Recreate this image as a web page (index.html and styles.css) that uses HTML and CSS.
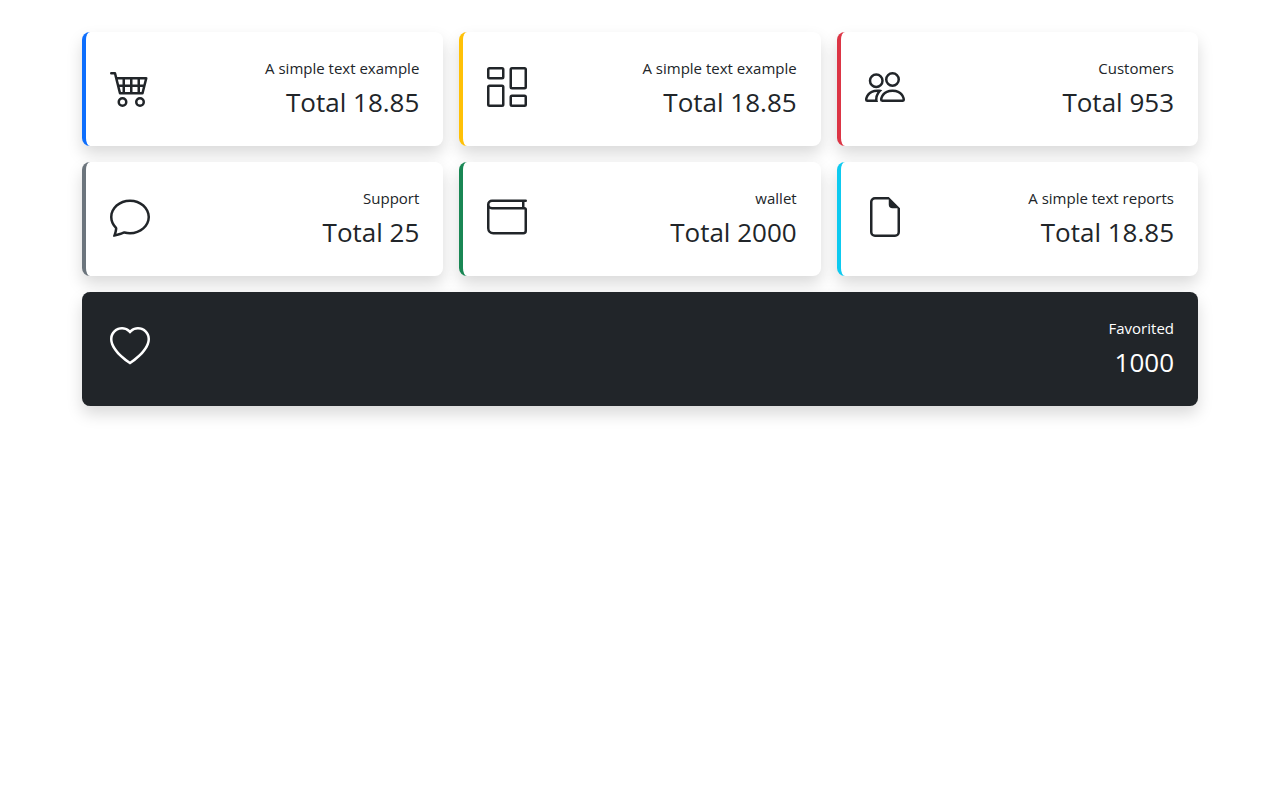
FILE: index.html
```html
<!DOCTYPE html>
<html lang="en">
<head>
    <meta charset="utf-8">
    <meta name="viewport" content="width=device-width, initial-scale=1">
    <title>Cards</title>
    <link rel="stylesheet" href="styles.css">
</head>
<body>
    <main class="container">
        <div class="cards">
            <div class="card card-primary">
                <svg class="icon" viewBox="0 0 16 16" aria-hidden="true">
                    <path d="M0 2.5A.5.5 0 0 1 .5 2H2a.5.5 0 0 1 .485.379L2.89 4H14.5a.5.5 0 0 1 .485.621l-1.5 6A.5.5 0 0 1 13 11H4a.5.5 0 0 1-.485-.379L1.61 3H.5a.5.5 0 0 1-.5-.5M3.14 5l.5 2H5V5zM6 5v2h2V5zm3 0v2h2V5zm3 0v2h1.36l.5-2zm1.11 3H12v2h.61zM11 8H9v2h2zM8 8H6v2h2zM5 8H3.89l.5 2H5zm0 5a1 1 0 1 0 0 2 1 1 0 0 0 0-2m-2 1a2 2 0 1 1 4 0 2 2 0 0 1-4 0m9-1a1 1 0 1 0 0 2 1 1 0 0 0 0-2m-2 1a2 2 0 1 1 4 0 2 2 0 0 1-4 0"/>
                </svg>
                <div class="info">
                    <p>A simple text example</p>
                    <h3>Total 18.85</h3>
                </div>
            </div>

            <div class="card card-warning">
                <svg class="icon" viewBox="0 0 16 16" aria-hidden="true">
                    <path d="M6 1v3H1V1zM1 0a1 1 0 0 0-1 1v3a1 1 0 0 0 1 1h5a1 1 0 0 0 1-1V1a1 1 0 0 0-1-1zm14 12v3h-5v-3zm-5-1a1 1 0 0 0-1 1v3a1 1 0 0 0 1 1h5a1 1 0 0 0 1-1v-3a1 1 0 0 0-1-1zM6 8v7H1V8zM1 7a1 1 0 0 0-1 1v7a1 1 0 0 0 1 1h5a1 1 0 0 0 1-1V8a1 1 0 0 0-1-1zm14-6v7h-5V1zm-5-1a1 1 0 0 0-1 1v7a1 1 0 0 0 1 1h5a1 1 0 0 0 1-1V1a1 1 0 0 0-1-1z"/>
                </svg>
                <div class="info">
                    <p>A simple text example</p>
                    <h3>Total 18.85</h3>
                </div>
            </div>

            <div class="card card-danger">
                <svg class="icon" viewBox="0 0 16 16" aria-hidden="true">
                    <path d="M15 14s1 0 1-1-1-4-5-4-5 3-5 4 1 1 1 1zm-7.978-1L7 12.996c.001-.264.167-1.03.76-1.72C8.312 10.629 9.282 10 11 10c1.717 0 2.687.63 3.24 1.276.593.69.758 1.457.76 1.72l-.008.002-.014.002zM11 7a2 2 0 1 0 0-4 2 2 0 0 0 0 4m3-2a3 3 0 1 1-6 0 3 3 0 0 1 6 0M6.936 9.28a6 6 0 0 0-1.23-.247A7 7 0 0 0 5 9c-4 0-5 3-5 4q0 1 1 1h4.216A2.24 2.24 0 0 1 5 13c0-1.01.377-2.042 1.09-2.904.243-.294.526-.569.846-.816M4.92 10A5.5 5.5 0 0 0 4 13H1c0-.26.164-1.03.76-1.724.545-.636 1.492-1.256 3.16-1.275zM1.5 5.5a3 3 0 1 1 6 0 3 3 0 0 1-6 0m3-2a2 2 0 1 0 0 4 2 2 0 0 0 0-4"/>
                </svg>
                <div class="info">
                    <p>Customers</p>
                    <h3>Total 953</h3>
                </div>
            </div>

            <div class="card card-secondary">
                <svg class="icon" viewBox="0 0 16 16" aria-hidden="true">
                    <path d="M2.678 11.894a1 1 0 0 1 .287.801 11 11 0 0 1-.398 2c1.395-.323 2.247-.697 2.634-.893a1 1 0 0 1 .71-.074A8 8 0 0 0 8 14c3.996 0 7-2.807 7-6s-3.004-6-7-6-7 2.808-7 6c0 1.468.617 2.83 1.678 3.894m-.493 3.905a22 22 0 0 1-.713.129c-.2.032-.352-.176-.273-.362a10 10 0 0 0 .244-.637l.003-.01c.248-.72.45-1.548.524-2.319C.743 11.37 0 9.76 0 8c0-3.866 3.582-7 8-7s8 3.134 8 7-3.582 7-8 7a9 9 0 0 1-2.347-.306c-.52.263-1.639.742-3.468 1.105"/>
                </svg>
                <div class="info">
                    <p>Support</p>
                    <h3>Total 25</h3>
                </div>
            </div>

            <div class="card card-success">
                <svg class="icon" viewBox="0 0 16 16" aria-hidden="true">
                    <path d="M0 3a2 2 0 0 1 2-2h13.5a.5.5 0 0 1 0 1H15v2a1 1 0 0 1 1 1v8.5a1.5 1.5 0 0 1-1.5 1.5h-12A2.5 2.5 0 0 1 0 12.5zm1 1.732V12.5A1.5 1.5 0 0 0 2.5 14h12a.5.5 0 0 0 .5-.5V5H2a2 2 0 0 1-1-.268M1 3a1 1 0 0 0 1 1h12V2H2a1 1 0 0 0-1 1"/>
                </svg>
                <div class="info">
                    <p>wallet</p>
                    <h3>Total 2000</h3>
                </div>
            </div>

            <div class="card card-info">
                <svg class="icon" viewBox="0 0 16 16" aria-hidden="true">
                    <path d="M14 4.5V14a2 2 0 0 1-2 2H4a2 2 0 0 1-2-2V2a2 2 0 0 1 2-2h5.5zm-3 0A1.5 1.5 0 0 1 9.5 3V1H4a1 1 0 0 0-1 1v12a1 1 0 0 0 1 1h8a1 1 0 0 0 1-1V4.5z"/>
                </svg>
                <div class="info">
                    <p>A simple text reports</p>
                    <h3>Total 18.85</h3>
                </div>
            </div>

            <div class="card card-dark">
                <svg class="icon" viewBox="0 0 16 16" aria-hidden="true">
                    <path d="m8 2.748-.717-.737C5.6.281 2.514.878 1.4 3.053c-.523 1.023-.641 2.5.314 4.385.92 1.815 2.834 3.989 6.286 6.357 3.452-2.368 5.365-4.542 6.286-6.357.955-1.886.838-3.362.314-4.385C13.486.878 10.4.28 8.717 2.01zM8 15C-7.333 4.868 3.279-3.04 7.824 1.143q.09.083.176.171a3 3 0 0 1 .176-.17C12.72-3.042 23.333 4.867 8 15"/>
                </svg>
                <div class="info">
                    <p>Favorited</p>
                    <h3>1000</h3>
                </div>
            </div>
        </div>
    </main>
</body>
</html>
```

FILE: styles.css
```css
* {
    box-sizing: border-box;
}

body {
    margin: 0;
    background: #fff;
    color: #212529;
    font-family: "Segoe UI", "Open Sans", "Noto Sans", sans-serif;
    font-size: 15px;
    line-height: 24px;
}

.container {
    max-width: 1140px;
    margin: 0 auto;
    padding: 32px 12px;
}

.cards {
    display: grid;
    grid-template-columns: repeat(3, 1fr);
    gap: 16px;
}

.card {
    display: flex;
    justify-content: space-between;
    align-items: center;
    padding: 24px;
    background: #fff;
    border-left: 4px solid;
    border-radius: 8px;
    box-shadow: 0 8px 16px rgba(0, 0, 0, 0.15);
}

.icon {
    flex: none;
    width: 40px;
    height: 40px;
    margin-bottom: 4px;
    fill: #212529;
}

.info {
    text-align: right;
}

.info p {
    margin: 0 0 6px;
}

.info h3 {
    margin: 0 0 4px;
    font-size: 26px;
    font-weight: 400;
    line-height: 32px;
}

.card-primary { border-color: #0d6efd; }
.card-warning { border-color: #ffc107; }
.card-danger { border-color: #dc3545; }
.card-secondary { border-color: #6c757d; }
.card-success { border-color: #198754; }
.card-info { border-color: #0dcaf0; }

.card-dark {
    grid-column: 1 / -1;
    background: #212529;
    border-color: #212529;
    color: #fff;
}

.card-dark .icon {
    fill: #fff;
}

@media (max-width: 991px) {
    .cards {
        grid-template-columns: repeat(2, 1fr);
    }
}

@media (max-width: 575px) {
    .cards {
        grid-template-columns: 1fr;
    }
}
```
